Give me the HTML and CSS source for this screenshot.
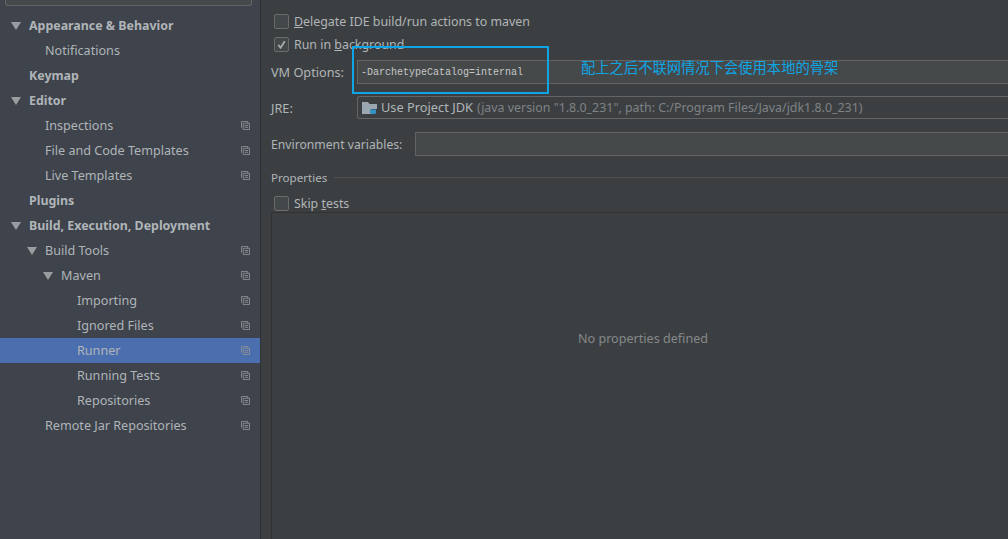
FILE: index.html
```html
<!DOCTYPE html>
<html>
<head>
  <title>Settings - Runner</title>
  <link rel="stylesheet" href="styles.css">
</head>
<body>
  <div class="sidebar">
    <div class="search"></div>
    <ul class="tree">
      <li class="row bold"><span class="arrow"></span>Appearance &amp; Behavior</li>
      <li class="row lvl1">Notifications</li>
      <li class="row bold">Keymap</li>
      <li class="row bold"><span class="arrow"></span>Editor</li>
      <li class="row lvl1">Inspections<svg class="copy" viewBox="0 0 10 10"><path d="M2.5 .5H.5V7.5M2.5 7.5V2.5H9.5V9.5H2.5V7.5M4 5H8M4 7H8M2.5 .5H7.5V2.5"/></svg></li>
      <li class="row lvl1">File and Code Templates<svg class="copy" viewBox="0 0 10 10"><path d="M2.5 .5H.5V7.5M2.5 7.5V2.5H9.5V9.5H2.5V7.5M4 5H8M4 7H8M2.5 .5H7.5V2.5"/></svg></li>
      <li class="row lvl1">Live Templates<svg class="copy" viewBox="0 0 10 10"><path d="M2.5 .5H.5V7.5M2.5 7.5V2.5H9.5V9.5H2.5V7.5M4 5H8M4 7H8M2.5 .5H7.5V2.5"/></svg></li>
      <li class="row bold">Plugins</li>
      <li class="row bold"><span class="arrow"></span>Build, Execution, Deployment</li>
      <li class="row lvl1"><span class="arrow"></span>Build Tools<svg class="copy" viewBox="0 0 10 10"><path d="M2.5 .5H.5V7.5M2.5 7.5V2.5H9.5V9.5H2.5V7.5M4 5H8M4 7H8M2.5 .5H7.5V2.5"/></svg></li>
      <li class="row lvl2"><span class="arrow"></span>Maven<svg class="copy" viewBox="0 0 10 10"><path d="M2.5 .5H.5V7.5M2.5 7.5V2.5H9.5V9.5H2.5V7.5M4 5H8M4 7H8M2.5 .5H7.5V2.5"/></svg></li>
      <li class="row lvl3">Importing<svg class="copy" viewBox="0 0 10 10"><path d="M2.5 .5H.5V7.5M2.5 7.5V2.5H9.5V9.5H2.5V7.5M4 5H8M4 7H8M2.5 .5H7.5V2.5"/></svg></li>
      <li class="row lvl3">Ignored Files<svg class="copy" viewBox="0 0 10 10"><path d="M2.5 .5H.5V7.5M2.5 7.5V2.5H9.5V9.5H2.5V7.5M4 5H8M4 7H8M2.5 .5H7.5V2.5"/></svg></li>
      <li class="row lvl3 selected">Runner<svg class="copy" viewBox="0 0 10 10"><path d="M2.5 .5H.5V7.5M2.5 7.5V2.5H9.5V9.5H2.5V7.5M4 5H8M4 7H8M2.5 .5H7.5V2.5"/></svg></li>
      <li class="row lvl3">Running Tests<svg class="copy" viewBox="0 0 10 10"><path d="M2.5 .5H.5V7.5M2.5 7.5V2.5H9.5V9.5H2.5V7.5M4 5H8M4 7H8M2.5 .5H7.5V2.5"/></svg></li>
      <li class="row lvl3">Repositories<svg class="copy" viewBox="0 0 10 10"><path d="M2.5 .5H.5V7.5M2.5 7.5V2.5H9.5V9.5H2.5V7.5M4 5H8M4 7H8M2.5 .5H7.5V2.5"/></svg></li>
      <li class="row lvl1">Remote Jar Repositories<svg class="copy" viewBox="0 0 10 10"><path d="M2.5 .5H.5V7.5M2.5 7.5V2.5H9.5V9.5H2.5V7.5M4 5H8M4 7H8M2.5 .5H7.5V2.5"/></svg></li>
    </ul>
  </div>

  <div class="main">
    <div class="check-row first">
      <span class="checkbox"></span>
      <span><u>D</u>elegate IDE build/run actions to maven</span>
    </div>
    <div class="check-row second">
      <span class="checkbox">
        <svg viewBox="0 0 14 14"><path d="M3.5 7.5L6 10.5L10.5 3.5"/></svg>
      </span>
      <span>Run in <u>b</u>ackground</span>
    </div>

    <div class="field-row vm">
      <label class="label-vm">VM Options:</label>
      <div class="field mono">-DarchetypeCatalog=internal</div>
    </div>
    <div class="field-row jre">
      <label class="label-vm">JRE:</label>
      <div class="field combo">
        <svg class="jdk" viewBox="0 0 16 14">
          <path class="folder" d="M0 1H6L7.5 3H15V8H9V13H0Z"/>
          <path class="cup" d="M8 8.5H14V11.5Q14 13 12.5 13H9.5Q8 13 8 11.5Z"/>
        </svg>
        <span class="jdk-name">Use Project JDK</span>
        <span class="dim">(java version "1.8.0_231", path: C:/Program Files/Java/jdk1.8.0_231)</span>
      </div>
    </div>
    <div class="field-row env">
      <label class="label-env">Environment variables:</label>
      <div class="field"></div>
    </div>

    <div class="section">
      <span>Properties</span>
      <div class="section-line"></div>
    </div>
    <div class="check-row skip">
      <span class="checkbox"></span>
      <span>Skip <u>t</u>ests</span>
    </div>
    <div class="props">No properties defined</div>

    <div class="note-box"></div>
    <div class="note-text">配上之后不联网情况下会使用本地的骨架</div>
  </div>
</body>
</html>
```

FILE: styles.css
```css
* {
  box-sizing: border-box;
}

html, body {
  height: 100%;
}

body {
  margin: 0;
  display: flex;
  overflow: hidden;
  background-color: #3c3f41;
  color: #b0b5b8;
  font-family: "Noto Sans", "Noto Sans CJK SC", sans-serif;
  font-size: 12.6px;
}

/* left settings tree */
.sidebar {
  width: 261px;
  flex-shrink: 0;
  background-color: #3e434c;
  border-right: 1px solid #323232;
}

.search {
  height: 6px;
  margin: 0 8px 0 5px;
  background-color: #45494a;
  border: 1px solid #646464;
  border-top: none;
  border-radius: 0 0 3px 3px;
}

.tree {
  list-style: none;
  margin: 7px 0 0;
  padding: 0;
}

.row {
  position: relative;
  height: 25px;
  line-height: 25px;
  padding-left: 29px;
  white-space: nowrap;
}

.bold {
  font-size: 12.4px;
  font-weight: bold;
}

.lvl1 {
  padding-left: 45px;
}

.lvl2 {
  padding-left: 61px;
}

.lvl3 {
  padding-left: 77px;
}

.selected {
  background-color: #4b6eaf;
}

.arrow {
  position: absolute;
  top: 9px;
  margin-left: -18px;
  width: 0;
  height: 0;
  border-left: 5px solid transparent;
  border-right: 5px solid transparent;
  border-top: 8px solid #9a9d9f;
}

.copy {
  position: absolute;
  right: 10px;
  top: 8px;
  width: 9px;
  height: 9px;
  fill: none;
  stroke: #8d9295;
  stroke-width: 1;
}

/* right panel */
.main {
  position: relative;
  flex: 1;
  min-width: 0;
  padding-top: 9px;
}

.check-row {
  display: flex;
  align-items: center;
  gap: 5px;
  height: 24px;
  padding-left: 13px;
  font-size: 12.4px;
}

.second {
  margin-top: -1px;
}

.checkbox {
  width: 15px;
  height: 15px;
  background-color: #43494a;
  border: 1px solid #6b6b6b;
  border-radius: 2px;
}

.checkbox svg {
  display: block;
  width: 13px;
  height: 13px;
  fill: none;
  stroke: #a9a9a9;
  stroke-width: 2;
}

.field-row {
  display: flex;
  align-items: center;
  padding-left: 10px;
}

.vm {
  height: 24px;
  margin-top: 4px;
}

.jre {
  height: 23px;
  margin-top: 12px;
}

.env {
  height: 24px;
  margin-top: 13px;
}

.label-vm {
  width: 86px;
  flex-shrink: 0;
  font-size: 12.7px;
}

.label-env {
  width: 144px;
  flex-shrink: 0;
  font-size: 12.2px;
}

.field {
  flex: 1;
  height: 100%;
  background-color: #45494a;
  border: 1px solid #646464;
  border-right: none;
  line-height: 22px;
  padding-left: 4px;
}

.mono {
  font-family: "Liberation Mono", "DejaVu Sans Mono", monospace;
  font-size: 10px;
  line-height: 24px;
  padding-left: 3px;
  color: #c6c8c8;
}

.combo {
  display: flex;
  align-items: center;
  gap: 3px;
  background-color: #3c3f41;
  border-radius: 3px 0 0 3px;
}

.jdk {
  width: 16px;
  height: 14px;
}

.jdk-name {
  font-size: 12.8px;
  line-height: 20px;
  margin-bottom: 1px;
}

.folder {
  fill: #9aa7b0;
}

.cup {
  fill: #3592c4;
}

.dim {
  font-size: 12.4px;
  color: #7f8285;
  margin-left: 1px;
}

.section {
  display: flex;
  align-items: center;
  gap: 7px;
  height: 20px;
  margin-top: 11px;
  padding-left: 10px;
  font-size: 11.6px;
}

.section-line {
  flex: 1;
  height: 1px;
  background-color: #515151;
}

.skip {
  margin-top: 4px;
}

.props {
  height: 330px;
  margin: -3px 0 0 10px;
  padding-top: 115px;
  padding-left: 6px;
  border-top: 1px solid #323232;
  border-left: 1px solid #323232;
  color: #84888a;
  text-align: center;
  line-height: 22px;
}

/* annotation drawn over the screenshot */
.note-box {
  position: absolute;
  left: 91px;
  top: 46px;
  width: 197px;
  height: 48px;
  border: 2px solid #0ea5e4;
}

.note-text {
  position: absolute;
  left: 320px;
  top: 57px;
  font-family: "Noto Sans CJK SC", sans-serif;
  font-size: 14.3px;
  line-height: 20px;
  color: #0ea5e4;
  white-space: nowrap;
}
```
